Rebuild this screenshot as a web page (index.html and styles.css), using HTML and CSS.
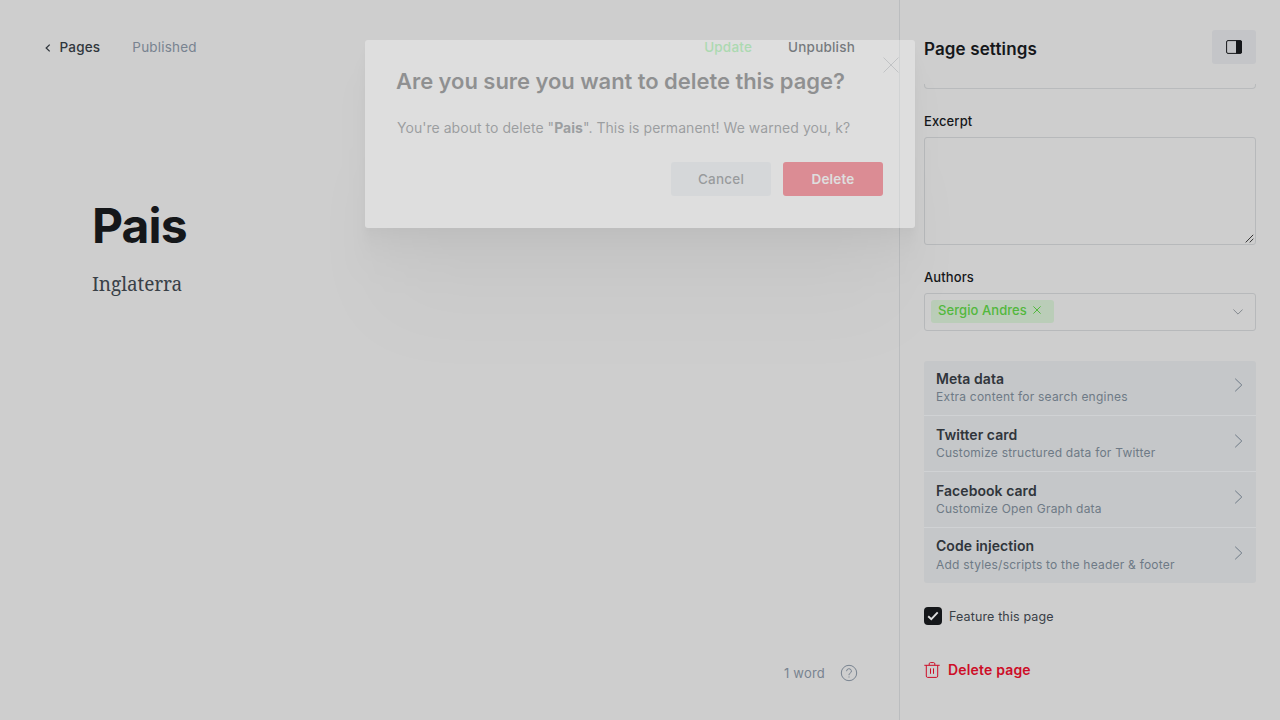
FILE: index.html
```html
<!DOCTYPE html>
<html lang="en">
<head>
<meta charset="utf-8">
<title>Page settings</title>
<link rel="stylesheet" href="styles.css">
</head>
<body>
<div class="app">
  <main class="editor">
    <header class="toolbar">
      <a class="back"><svg width="6" height="8" viewBox="0 0 6 8"><path d="M4.7.6 1.2 4l3.5 3.4"/></svg><span>Pages</span></a>
      <span class="status">Published</span>
      <span class="update">Update</span>
      <span class="unpublish">Unpublish</span>
    </header>
    <article class="content">
      <h1>Pais</h1>
      <p>Inglaterra</p>
    </article>
    <footer class="wordcount">
      <span>1 word</span>
      <svg width="18" height="18" viewBox="0 0 18 18"><circle cx="9" cy="9" r="7.7"/><path d="M6.6 7.2a2.4 2.4 0 1 1 3.4 2.1c-.7.4-1 .8-1 1.5v.4M9 12.5v1"/></svg>
    </footer>
  </main>
  <aside class="settings">
    <header class="settings-head">
      <h2>Page settings</h2>
      <button class="toggle"><svg width="16" height="14" viewBox="0 0 16 14"><rect x=".6" y=".6" width="14.8" height="12.8" rx="1.4"/><path d="M10 .5h4.5A1.4 1.4 0 0 1 16 2v10a1.4 1.4 0 0 1-1.5 1.5H10z"/></svg></button>
    </header>
    <div class="clipped"></div>
    <label class="label">Excerpt</label>
    <div class="textarea"><svg width="9" height="9" viewBox="0 0 9 9"><path d="M.7 8.4 8.2.8M4.7 8.4l3.6-3.6"/></svg></div>
    <label class="label">Authors</label>
    <div class="select">
      <span class="tag">Sergio Andres<svg width="8" height="8" viewBox="0 0 8 8"><path d="M.4.4l7.2 7.2M7.6.4.4 7.6"/></svg></span>
      <svg class="down" width="10" height="6" viewBox="0 0 10 6"><path d="M.4.5 5 5.1 9.6.5"/></svg>
    </div>
    <nav class="menu">
      <a class="row"><span><b>Meta data</b><small>Extra content for search engines</small></span><svg width="9" height="14" viewBox="0 0 9 14"><path d="M1.2.7 7.8 7l-6.6 6.3"/></svg></a>
      <a class="row"><span><b>Twitter card</b><small>Customize structured data for Twitter</small></span><svg width="9" height="14" viewBox="0 0 9 14"><path d="M1.2.7 7.8 7l-6.6 6.3"/></svg></a>
      <a class="row"><span><b>Facebook card</b><small>Customize Open Graph data</small></span><svg width="9" height="14" viewBox="0 0 9 14"><path d="M1.2.7 7.8 7l-6.6 6.3"/></svg></a>
      <a class="row"><span><b>Code injection</b><small>Add styles/scripts to the header &amp; footer</small></span><svg width="9" height="14" viewBox="0 0 9 14"><path d="M1.2.7 7.8 7l-6.6 6.3"/></svg></a>
    </nav>
    <div class="feature"><i class="check"><svg width="12" height="10" viewBox="0 0 12 10"><path d="M1.2 5.2 4.3 8.1 10.7 1.3"/></svg></i><span>Feature this page</span></div>
    <div class="remove"><svg width="16" height="16" viewBox="0 0 16 16"><path d="M.3 3.3h15.4M2.3 3.3v10.8c0 .8.5 1.3 1.3 1.3h8.8c.8 0 1.3-.5 1.3-1.3V3.3M5.2 3.3V1.8c0-.7.5-1.2 1.2-1.2h3.2c.7 0 1.2.5 1.2 1.2v1.5M6.5 6.4v5.4M9.5 6.4v5.4"/></svg><span>Delete page</span></div>
  </aside>
</div>
<div class="modal">
  <svg class="close" width="16" height="16" viewBox="0 0 16 16"><path d="M.5.5l15 15M15.5.5l-15 15"/></svg>
  <h3>Are you sure you want to delete this page?</h3>
  <p>You're about to delete "<strong>Pais</strong>". This is permanent! We warned you, k?</p>
  <div class="actions"><button class="cancel">Cancel</button><button class="delete">Delete</button></div>
</div>
</body>
</html>
```
FILE: styles.css
```css
* { box-sizing: border-box; }
body { margin: 0; background: #cecece; font-family: Inter, "Liberation Sans", sans-serif; font-size: 13px; color: #15171a; overflow: hidden; }
svg { display: block; fill: none; stroke: currentColor; flex: none; }
h1, h2, h3, p { margin: 0; }
button { border: 0; padding: 0; font: inherit; color: inherit; }
.app { display: flex; height: 720px; }
.editor { width: 899px; display: flex; flex-direction: column; }
.toolbar { display: flex; align-items: center; height: 94px; padding: 0 44px 0 44.5px; font-size: 13.5px; letter-spacing: .2px; font-weight: 500; color: #30363c; }
.back { display: flex; align-items: center; gap: 9px; }
.back svg { stroke-width: 1.3; margin-top: 2px; }
.status { margin-left: 32px; color: #788390; font-weight: 400; }
.update { margin-left: auto; color: #83c78a; }
.unpublish { margin-left: 36px; }
.content { flex: 1; padding: 102px 92px 0; }
h1 { font-size: 48px; line-height: 60px; font-weight: 700; letter-spacing: -.9px; }
.content p { margin-top: 14px; font: 19px/28px "Noto Serif", "Liberation Serif", serif; letter-spacing: -.1px; color: #394047; }
.wordcount { display: flex; justify-content: flex-end; align-items: center; gap: 15px; height: 94px; padding-right: 41px; font-size: 13px; letter-spacing: .2px; color: #788390; }
.settings { width: 381px; border-left: 1px solid #bbbdbf; padding: 0 24px; }
.settings-head { display: flex; justify-content: space-between; align-items: flex-start; height: 84px; padding-top: 30px; }
h2 { font-size: 17px; line-height: 38px; font-weight: 600; letter-spacing: .13px; }
.toggle { width: 44px; height: 34px; border-radius: 3px; background: #c4c5c8; display: grid; place-items: center; }
.toggle path { fill: #15171a; stroke: none; }
.clipped { height: 5px; border: 1px solid #b9bbbd; border-top: 0; border-radius: 0 0 4px 4px; }
.label { display: block; margin-top: 22px; line-height: 20px; font-size: 13px; font-weight: 500; letter-spacing: .1px; }
.textarea { height: 108px; margin-top: 5.5px; border: 1px solid #b7b9bb; border-radius: 3px; display: flex; justify-content: flex-end; align-items: flex-end; padding: 0 1px 1px 0; color: #333; }
.textarea + .label { margin-top: 22.5px; }
.select { height: 38px; margin-top: 5.5px; border: 1px solid #b7b9bb; border-radius: 3px; display: flex; align-items: center; justify-content: space-between; padding: 0 12px 0 6px; }
.tag { display: flex; align-items: center; gap: 6px; height: 23px; margin-bottom: 1px; padding: 0 13px 2px 7px; border-radius: 3px; background: #bacdb8; color: #52b83d; font-size: 13px; font-weight: 500; letter-spacing: .07px; }
.down { color: #84898f; }
.menu { margin-top: 30px; background: #c5c7c9; border-radius: 3px; height: 222px; display: grid; grid-template-rows: 55px 56px 56px 55px; }
.row { display: flex; align-items: flex-start; justify-content: space-between; padding: 9px 13px 0 12px; border-bottom: 1px solid #d0d2d4; }
.row:last-child { border-bottom: 0; }
.row:nth-child(n+2) { padding-top: 10px; }
.row:last-child { padding-top: 9px; }
.row:last-child small { margin-top: 1px; }
.row svg { margin-top: 8.5px; color: #6e7a86; }
.row:last-child svg { margin-top: 9.5px; }
.row b { display: block; font-size: 14px; line-height: 18px; font-weight: 600; letter-spacing: .05px; color: #30353b; }
.row small { display: block; font-size: 12px; line-height: 18px; letter-spacing: .22px; color: #6e7a86; }
.feature { display: flex; align-items: center; gap: 7px; margin-top: 24px; height: 19px; font-size: 12.5px; letter-spacing: .13px; color: #394047; }
.check { width: 18px; height: 18px; border-radius: 4px; background: #15171a; color: #dedede; display: grid; place-items: center; margin-bottom: 1px; }
.check svg { stroke-width: 1.9; }
.remove { display: flex; align-items: center; gap: 8px; margin-top: 34px; height: 20px; color: #cd0d27; font-size: 14px; font-weight: 600; letter-spacing: .17px; }
.modal { position: absolute; left: 365px; top: 40px; width: 550px; height: 188px; padding: 26px 32px 0; background: #fff; border-radius: 3px; opacity: .335; box-shadow: 0 2.8px 2.2px rgba(0,0,0,.02), 0 6.7px 5.3px rgba(0,0,0,.028), 0 12.5px 10px rgba(0,0,0,.035), 0 22.3px 17.9px rgba(0,0,0,.042), 0 41.8px 33.4px rgba(0,0,0,.05), 0 100px 80px -25px rgba(0,0,0,.07); }
.close { position: absolute; top: 16.5px; right: 16px; color: #aab0b6; }
h3 { font-size: 22px; line-height: 30px; font-weight: 600; letter-spacing: -.05px; margin-left: -1px; }
.modal p { margin-top: 22px; font-size: 14px; line-height: 20px; letter-spacing: .04px; color: #394047; }
.actions { display: flex; justify-content: flex-end; gap: 12px; margin-top: 24px; }
.actions button { width: 100px; height: 34px; border-radius: 3px; font-weight: 500; font-size: 13.5px; letter-spacing: .2px; }
.cancel { background: #e5ebf1; color: #30363c; }
.actions .delete { background: #f50b23; color: #fff; font-weight: 600; }
```
